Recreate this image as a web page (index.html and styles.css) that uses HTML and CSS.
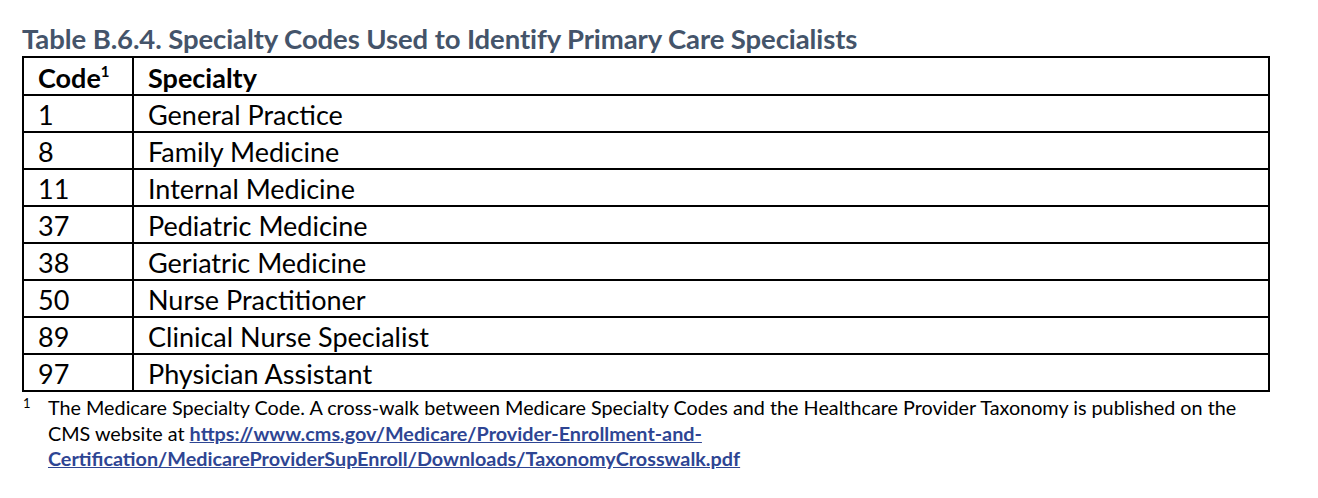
FILE: index.html
```html
<!DOCTYPE html>
<html>
<head>
<meta charset="utf-8">
<link rel="stylesheet" href="styles.css">
</head>
<body>
<div class="page">
  <h1 class="title">Table B.6.4. Specialty Codes Used to Identify Primary Care Specialists</h1>
  <table class="codes">
    <colgroup><col class="col-code"><col class="col-spec"></colgroup>
    <thead>
      <tr><th>Code<sup>1</sup></th><th>Specialty</th></tr>
    </thead>
    <tbody>
      <tr><td>1</td><td>General Practice</td></tr>
      <tr><td>8</td><td>Family Medicine</td></tr>
      <tr><td>11</td><td>Internal Medicine</td></tr>
      <tr><td>37</td><td>Pediatric Medicine</td></tr>
      <tr><td>38</td><td>Geriatric Medicine</td></tr>
      <tr><td>50</td><td>Nurse Practitioner</td></tr>
      <tr><td>89</td><td>Clinical Nurse Specialist</td></tr>
      <tr><td>97</td><td>Physician Assistant</td></tr>
    </tbody>
  </table>
  <div class="note">
    <span class="mark">1</span>
    <p class="note-text">The Medicare Specialty Code. A cross-walk between Medicare Specialty Codes and the Healthcare Provider Taxonomy is published on the<br>CMS website at <a href="#">https://www.cms.gov/Medicare/Provider-Enrollment-and-<br>Certification/MedicareProviderSupEnroll/Downloads/TaxonomyCrosswalk.pdf</a></p>
  </div>
</div>
</body>
</html>
```

FILE: styles.css
```css
html, body { margin: 0; padding: 0; background: #fff; }
body { font-family: Lato, "Open Sans", sans-serif; color: #000; }
.page { padding: 22px 0 0 22px; width: 1250px; }
.title {
  margin: 0;
  font-size: 27.5px;
  font-weight: 700;
  color: #44546a;
  line-height: 34px;
  letter-spacing: -0.1px;
}
.codes {
  border-collapse: collapse;
  table-layout: fixed;
  width: 1248px;
  font-size: 27px;
}
.col-code { width: 110px; }
.codes th, .codes td {
  border: 2px solid #000;
  height: 36.7px;
  padding: 3px 0 0 14px;
  text-align: left;
  line-height: 32px;
  vertical-align: middle;
  box-sizing: border-box;
}
.codes th { font-weight: 700; height: 38px; }
.codes td + td, .codes th + th { padding-left: 14px; }
.codes sup { font-size: 15px; line-height: 0; vertical-align: 11px; }
.note { display: flex; font-size: 19.8px; line-height: 25.5px; margin-top: 3px; }
.mark { width: 25px; font-size: 13px; line-height: 16px; padding-left: 1px; }
.note-text { margin: 0; width: 1225px; }
.note-text a { color: #2e4593; font-weight: 700; text-decoration: underline; }
```
